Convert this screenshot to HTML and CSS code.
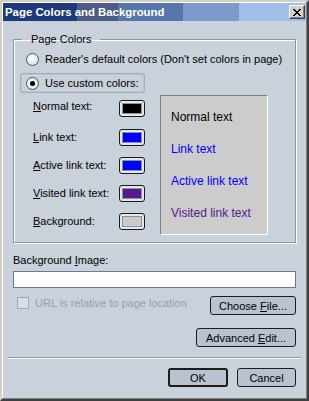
FILE: index.html
```html
<!DOCTYPE html>
<html lang="en">
<head>
    <meta charset="UTF-8">
    <title>Page Colors and Background</title>
    <link rel="stylesheet" href="styles.css">
</head>
<body>
    <div class="window">
        <div class="titlebar">
            <span class="title">Page Colors and Background</span>
            <button class="close" title="Close">
                <svg width="8" height="7" viewBox="0 0 8 7"><path d="M0 0L7 7M1 0L8 7M7 0L0 7M8 0L1 7" stroke="#000" stroke-width="1" shape-rendering="crispEdges"/></svg>
            </button>
        </div>

        <div class="content">
            <fieldset class="group">
                <legend>Page Colors</legend>

                <label class="option">
                    <span class="radio"></span>
                    Reader's default colors (Don't set colors in page)
                </label>
                <label class="option focused">
                    <span class="radio checked"></span>
                    Use custom colors:
                </label>

                <div class="colors">
                    <div class="pickers">
                        <div class="row"><span><u>N</u>ormal text:</span><button class="swatch"><i class="black"></i></button></div>
                        <div class="row"><span><u>L</u>ink text:</span><button class="swatch"><i class="blue"></i></button></div>
                        <div class="row"><span><u>A</u>ctive link text:</span><button class="swatch"><i class="blue"></i></button></div>
                        <div class="row"><span><u>V</u>isited link text:</span><button class="swatch"><i class="purple"></i></button></div>
                        <div class="row"><span><u>B</u>ackground:</span><button class="swatch"><i class="grey"></i></button></div>
                    </div>
                    <div class="preview">
                        <span>Normal text</span>
                        <span class="link">Link text</span>
                        <span class="link">Active link text</span>
                        <span class="visited">Visited link text</span>
                    </div>
                </div>
            </fieldset>

            <div class="bg-label">Background <u>I</u>mage:</div>
            <input class="url" type="text">

            <div class="file-row">
                <label class="check disabled"><span class="box"></span>URL is relative to page location</label>
                <button class="btn choose">Choose <u>F</u>ile...</button>
            </div>

            <div class="adv-row">
                <button class="btn advanced">Advanced <u>E</u>dit...</button>
            </div>

            <div class="separator"></div>

            <div class="actions">
                <button class="btn ok">OK</button>
                <button class="btn cancel">Cancel</button>
            </div>
        </div>
    </div>
</body>
</html>
```

FILE: styles.css
```css
body {
    margin: 0;
    padding: 0;
    font-family: 'Liberation Sans', Arial, sans-serif;
    font-size: 11px;
    color: #000;
}
.window {
    width: 309px;
    height: 401px;
    box-sizing: border-box;
    background-color: #c9d1db;
    border-top: 2px solid #d4d0c8;
    border-left: 2px solid #d4d0c8;
    border-right: 2px solid #404040;
    border-bottom: 2px solid #404040;
    box-shadow: inset -1px -1px 0 #808080, inset 1px 1px 0 #ffffff;
    padding: 1px;
    display: flex;
    flex-direction: column;
}
.titlebar {
    height: 18px;
    display: flex;
    align-items: center;
    justify-content: space-between;
    background: linear-gradient(to right,
        #1f3a7c 0, #1f3a7c 74px,
        #4b5b83 74px, #4b5b83 115px,
        #5675ad 115px, #5675ad 180px,
        #7b9bcb 180px, #7b9bcb 236px,
        #9dbfe8 236px);
}
.title {
    color: #ffffff;
    font-weight: bold;
    font-size: 11.4px;
    padding-left: 2px;
}
.close {
    width: 16px;
    height: 14px;
    margin-right: 1px;
    padding: 0;
    background-color: #d4d0c8;
    border: 1px solid;
    border-color: #ffffff #404040 #404040 #ffffff;
    box-shadow: inset -1px -1px 0 #808080;
    display: flex;
    align-items: center;
    justify-content: center;
}
.content {
    padding: 12px 10px 0 10px;
    display: flex;
    flex-direction: column;
}
.group {
    margin: 0;
    padding: 3px 6px 7px 6px;
    border: 1px solid #8a94a3;
    box-shadow: 1px 1px 0 #ffffff, inset 1px 1px 0 #ffffff;
    min-width: 0;
}
.group legend {
    padding: 0 8px 0 9px;
    margin-left: 2px;
    line-height: 13px;
}
.option {
    display: flex;
    align-items: center;
    gap: 6px;
    height: 20px;
    box-sizing: border-box;
    padding: 0 5px;
    border: 1px solid transparent;
    border-radius: 3px;
    white-space: nowrap;
    width: fit-content;
}
.option + .option {
    margin-top: 4px;
}
.option.focused {
    width: 125px;
    border-color: #a2acba;
    box-shadow: inset 0 0 0 1px #bdc5d0;
}
.radio {
    flex: none;
    width: 11px;
    height: 11px;
    border: 1px solid #4c5563;
    border-radius: 50%;
    background: radial-gradient(circle at 40% 40%, #ffffff 0, #e6eaf0 60%, #c3cad4 100%);
    display: flex;
    align-items: center;
    justify-content: center;
}
.radio.checked::after {
    content: "";
    width: 5px;
    height: 5px;
    border-radius: 50%;
    background-color: #000;
}
.colors {
    display: flex;
    margin-top: 2px;
}
.pickers {
    display: flex;
    flex-direction: column;
    padding-left: 13px;
    width: 112px;
    margin-right: 15px;
}
.row {
    height: 28px;
    display: flex;
    align-items: center;
    justify-content: space-between;
}
.row:first-child {
    align-items: flex-start;
    padding-top: 5px;
    height: 23px;
}
.swatch {
    width: 26px;
    height: 17px;
    padding: 2px;
    border: 1px solid #1a1a1a;
    border-radius: 3px;
    background-color: #e3e8ee;
    display: flex;
}
.swatch i {
    flex: 1;
    border: 1px solid #8a919c;
}
.black { background-color: #000000; }
.blue { background-color: #0000ff; }
.purple { background-color: #551a8b; }
.grey { background-color: #cccccc; }
.preview {
    width: 108px;
    height: 140px;
    box-sizing: border-box;
    background-color: #cccccc;
    border: 1px solid;
    border-color: #808080 #ffffff #ffffff #808080;
    padding: 15px 0 0 10px;
    display: flex;
    flex-direction: column;
    gap: 19px;
    font-size: 12px;
    line-height: 13px;
}
.preview .link { color: #0000ff; }
.preview .visited { color: #551a8b; }
.bg-label {
    margin-top: 10px;
    line-height: 14px;
}
.url {
    margin-top: 4px;
    height: 17px;
    box-sizing: border-box;
    border: 1px solid #6a7895;
    background-color: #ffffff;
    padding: 0 2px;
    font: inherit;
}
.file-row {
    margin-top: 8px;
    display: flex;
    align-items: flex-start;
    justify-content: space-between;
}
.check {
    display: flex;
    align-items: center;
    gap: 6px;
    margin: 0 0 0 4px;
    height: 13px;
}
.check.disabled {
    color: #97a1af;
}
.box {
    width: 10px;
    height: 10px;
    border: 1px solid #a1aab7;
    background-color: #d8dee6;
}
.btn {
    height: 19px;
    box-sizing: border-box;
    border: 1px solid #1c1c1c;
    border-radius: 3px;
    background-color: #b9c3d0;
    font: inherit;
    color: #000;
    padding: 0;
}
.choose { width: 86px; }
.adv-row {
    margin-top: 13px;
    display: flex;
    justify-content: flex-end;
}
.advanced { width: 100px; }
.separator {
    margin: 10px -5px 0 -5px;
    height: 1px;
    background-color: #8e98a6;
    border-bottom: 1px solid #ffffff;
}
.actions {
    margin-top: 9px;
    display: flex;
    justify-content: flex-end;
    gap: 9px;
}
.ok {
    width: 60px;
    border-width: 2px;
}
.cancel { width: 59px; }
```
